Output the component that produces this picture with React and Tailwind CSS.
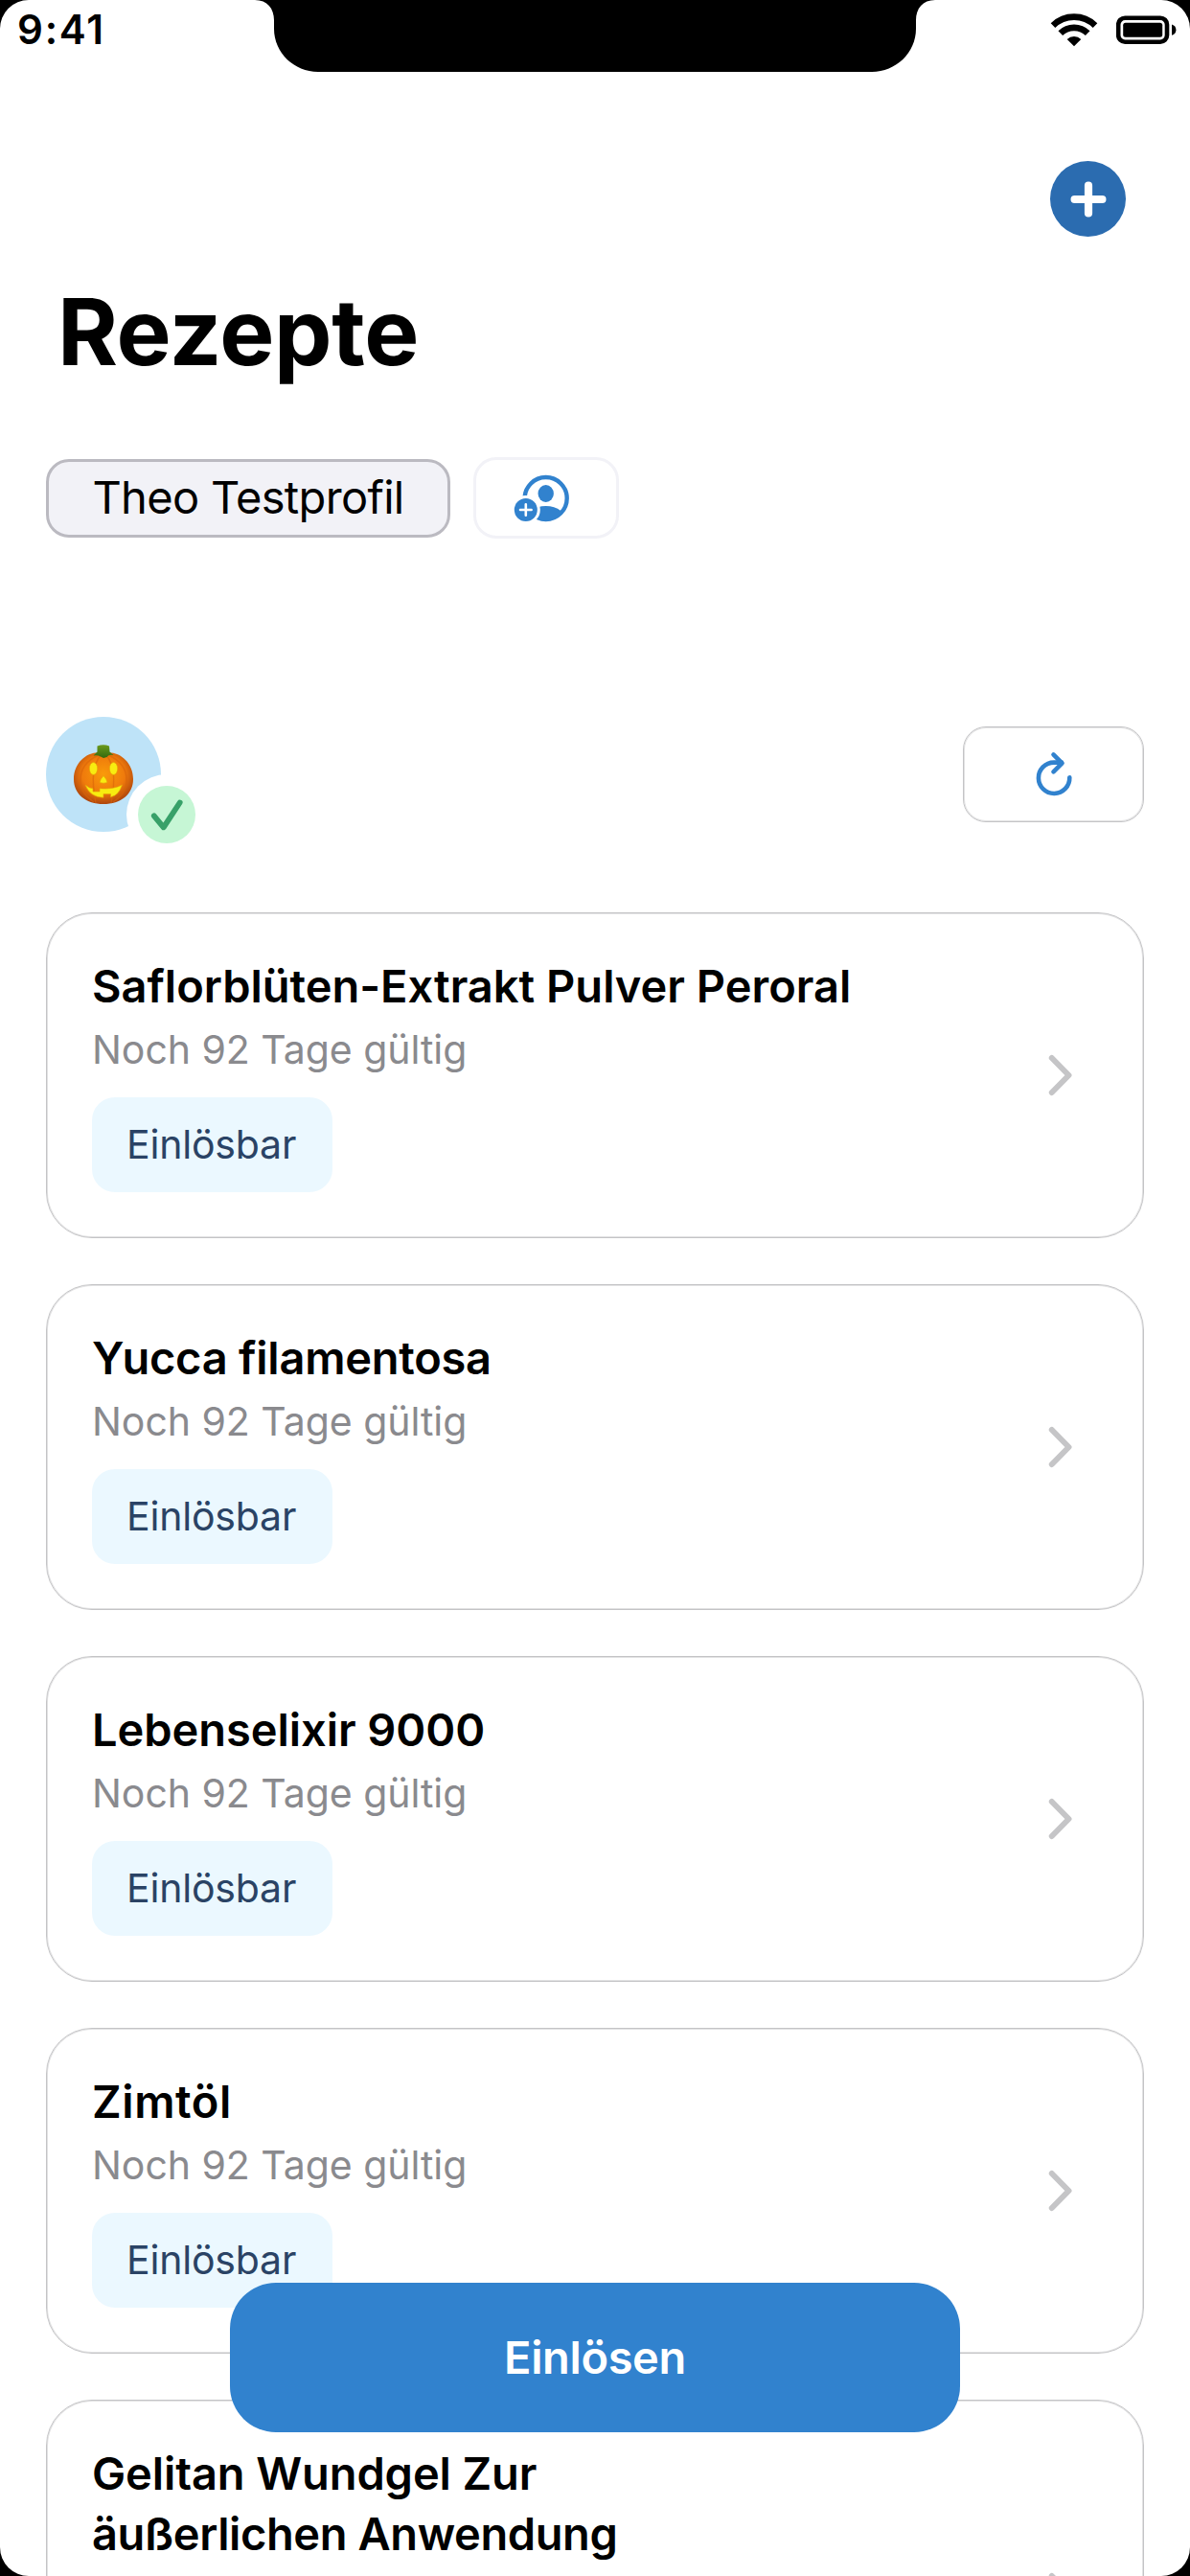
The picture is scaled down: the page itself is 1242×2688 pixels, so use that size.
const VALIDITY = "Noch 92 Tage gültig";
const STATUS = "Einlösbar";

const PRESCRIPTIONS = [
  { lines: [{ text: "Saflorblüten-Extrakt Pulver Peroral", tracking: "tracking-[0px]" }], validity: VALIDITY, status: STATUS },
  { lines: [{ text: "Yucca filamentosa", tracking: "tracking-[-0.25px]" }], validity: VALIDITY, status: STATUS },
  { lines: [{ text: "Lebenselixir 9000", tracking: "tracking-[-0.05px]" }], validity: VALIDITY, status: STATUS },
  { lines: [{ text: "Zimtöl", tracking: "tracking-[0.6px]" }], validity: VALIDITY, status: STATUS },
  {
    lines: [
      { text: "Gelitan Wundgel Zur", tracking: "tracking-[-0.1px]" },
      { text: "äußerlichen Anwendung", tracking: "tracking-[-0.4px]" },
    ],
  },
];

function Notch() {
  return (
    <svg width="710" height="75" viewBox="0 0 710 75" className="block shrink-0">
      <path d="M0 0H710C697 0 690 9 690 21V30C690 55 669 75 644 75H66C41 75 20 55 20 30V21C20 9 13 0 0 0Z" fill="#000" />
    </svg>
  );
}

function WifiIcon() {
  return (
    <svg width="50" height="36" viewBox="0 0 50 36" fill="none" stroke="#000" strokeWidth="6.6">
      <path d="M3 13.6A31.5 31.5 0 0 1 47 13.6" />
      <path d="M10.8 21.7A20.2 20.2 0 0 1 39.2 21.7" />
      <path d="M25 35.3L17.7 28A10.3 10.3 0 0 1 32.3 28Z" fill="#000" stroke="none" />
    </svg>
  );
}

function BatteryIcon() {
  return (
    <svg width="64" height="30" viewBox="0 0 64 30">
      <rect x="2.2" y="2.7" width="50.8" height="25" rx="7" fill="none" stroke="#000" strokeWidth="4.6" />
      <rect x="7.2" y="7.7" width="41" height="15" rx="2.5" fill="#000" />
      <path d="M58 9.6Q62.4 11 62.4 15.2T58 20.8Z" fill="#000" />
    </svg>
  );
}

function PlusIcon() {
  return (
    <svg width="38" height="38" viewBox="0 0 38 38" stroke="#fff" strokeWidth="8.2" strokeLinecap="round">
      <path d="M19 4.6V33.4M4.6 19H33.4" />
    </svg>
  );
}

function AddProfileIcon() {
  return (
    <svg width="60" height="52" viewBox="0 0 60 52">
      <defs>
        <clipPath id="profile-disc">
          <circle cx="33.7" cy="26" r="23.5" />
        </clipPath>
      </defs>
      <circle cx="33.7" cy="26" r="22" fill="none" stroke="#3182ce" strokeWidth="4.4" />
      <ellipse cx="33.7" cy="21" rx="8.2" ry="9" fill="#3182ce" />
      <ellipse cx="33.7" cy="51" rx="22" ry="17" fill="#3182ce" clipPath="url(#profile-disc)" />
      <circle cx="12.8" cy="38" r="15" fill="#fff" />
      <circle cx="12.8" cy="38" r="12" fill="#3182ce" />
      <path d="M12.8 32.2V43.8M7 38H18.6" stroke="#fff" strokeWidth="2.6" strokeLinecap="round" />
    </svg>
  );
}

function PumpkinIcon() {
  return (
    <svg width="64" height="64" viewBox="0 0 64 64">
      <defs>
        <radialGradient id="pumpkin-skin" cx="0.5" cy="0.42" r="0.6">
          <stop offset="0" stopColor="#f99a0a" />
          <stop offset="0.6" stopColor="#ef7a0c" />
          <stop offset="1" stopColor="#a8400c" />
        </radialGradient>
        <linearGradient id="pumpkin-stem" x1="0" y1="0" x2="0" y2="1">
          <stop offset="0" stopColor="#6c9a1c" />
          <stop offset="1" stopColor="#33690f" />
        </linearGradient>
      </defs>
      <path d="M32 10C46 6 63 18 63 37C63 53 50 63 32 63S1 53 1 37C1 18 18 6 32 10Z" fill="url(#pumpkin-skin)" />
      <g fill="none" stroke="#d9640a" strokeWidth="1.4" opacity="0.6">
        <path d="M27 12C13 18 8 28 8 38S12 54 22 61" />
        <path d="M29 12C21 22 19 36 24 62" />
        <path d="M35 12C43 22 45 36 40 62" />
        <path d="M37 12C51 18 56 28 56 38S52 54 42 61" />
      </g>
      <path d="M25.5 2.5Q32 0 38 2.5L38.5 8.5L42.5 12Q37 11 35.5 14L32 15L29 13.5Q26 11.5 21.5 12.5L25.5 8.5Z" fill="url(#pumpkin-stem)" />
      <g fill="#f8ec10" stroke="#e2a008" strokeWidth="0.6">
        <ellipse cx="21.5" cy="26" rx="4.2" ry="6.4" />
        <ellipse cx="42.5" cy="26" rx="4.2" ry="6.4" />
        <path d="M32 33.5Q35.5 37 36 40.5Q32 42 28 40.5Q28.5 37 32 33.5Z" />
        <path d="M13 43Q17 46.5 21 46.8V50H28V46.8Q42 48 51.5 43Q48 54 39.5 55.8V52.5H32V56.2Q18 56 13 43Z" />
      </g>
    </svg>
  );
}

function CheckIcon() {
  return (
    <svg width="60" height="60" viewBox="0 0 60 60" fill="none" stroke="#38a169" strokeWidth="5.8" strokeLinecap="round" strokeLinejoin="round">
      <path d="M16.8 31.3L26.7 43.3L43.7 17.5" />
    </svg>
  );
}

function RefreshIcon() {
  return (
    <svg width="40" height="48" viewBox="0 0 40 48" fill="none" stroke="#3182ce" strokeWidth="4.6" strokeLinecap="round" strokeLinejoin="round">
      <path d="M36.3 27.3A16.2 16.2 0 1 1 20 11.6H28" />
      <path d="M19.5 3.4L28.5 12.4L19.5 21.3" />
    </svg>
  );
}

function ChevronIcon() {
  return (
    <svg width="26" height="44" viewBox="0 0 26 44" fill="none" stroke="#c5c5c7" strokeWidth="6" strokeLinecap="round" strokeLinejoin="round" className="mt-[3px] mr-[73px] shrink-0">
      <path d="M3.8 4L21.5 22L3.8 40" />
    </svg>
  );
}

function PrescriptionCard({ lines, validity, status }) {
  const height = lines.length > 1 ? "h-[403px]" : "h-[340px]";
  return (
    <li className={`flex shrink-0 items-center justify-between rounded-[48px] border border-[#c4c4c6] bg-white pt-[44px] pb-[47px] pl-[47px] shadow-[inset_0_0_0_1px_#e2e2e3] ${height}`}>
      <div className="flex flex-col items-start self-start">
        <h2 className="text-[47px] leading-[63px] font-semibold">
          {lines.map((line) => (
            <span key={line.text} className={`block whitespace-nowrap ${line.tracking}`}>{line.text}</span>
          ))}
        </h2>
        {validity && <p className="mt-[8px] text-[41px] leading-[54px] tracking-[-0.04px] text-[#8a8a8e]">{validity}</p>}
        {status && (
          <span className="mt-[23px] flex h-[99px] w-[251px] items-center rounded-3xl bg-[#ebf8ff] pl-[36px] text-[41px] tracking-[-0.2px] text-[#2a4365]">
            {status}
          </span>
        )}
      </div>
      <ChevronIcon />
    </li>
  );
}

export default function App() {
  return (
    <div className="h-[2688px] w-[1242px] overflow-hidden bg-black font-[Inter,sans-serif] text-black">
      <div className="relative flex h-full flex-col overflow-hidden rounded-[30px] bg-white">
        <header className="flex h-[75px] shrink-0 items-start">
          <time className="w-[266px] shrink-0 pl-[18px] text-[42px] leading-[61px] font-semibold tracking-[1.8px]">9:41</time>
          <Notch />
          <div className="flex flex-1 items-start pt-[13px] pl-[120px]">
            <WifiIcon />
            <div className="ml-[19px] pt-[3px]">
              <BatteryIcon />
            </div>
          </div>
        </header>

        <div className="mt-[93px] mr-[67px] flex h-[79px] shrink-0 justify-end">
          <button className="flex size-[79px] items-center justify-center rounded-full bg-[#2b6cb0]">
            <PlusIcon />
          </button>
        </div>

        <h1 className="mt-[41px] ml-[60px] shrink-0 text-[96px] leading-[116px] font-bold tracking-[-0.33px]">Rezepte</h1>

        <nav className="mt-[73px] ml-12 flex h-[85px] shrink-0 items-center gap-6">
          <button className="flex h-[82px] w-[422px] items-center justify-center rounded-3xl border-3 border-[#bbbac1] bg-[#f2f2f7] text-[47px] tracking-[-0.67px] whitespace-nowrap">
            Theo Testprofil
          </button>
          <button className="flex h-[85px] w-[152px] items-center rounded-3xl border-3 border-[#f2f2f7] bg-white pl-[39px]">
            <AddProfileIcon />
          </button>
        </nav>

        <div className="mx-12 mt-[186px] flex h-[120px] shrink-0 items-center justify-between">
          <div className="relative flex size-[120px] items-center justify-center rounded-full bg-[#bee3f8]">
            <PumpkinIcon />
            <div className="absolute top-[60px] left-[84px] flex size-[84px] items-center justify-center rounded-full bg-white">
              <div className="flex size-[60px] items-center justify-center rounded-full bg-[#c6f6d5]">
                <CheckIcon />
              </div>
            </div>
          </div>
          <button className="flex h-[100px] w-[189px] items-center justify-center rounded-3xl border border-[#c4c4c6] shadow-[inset_0_0_0_1px_#e2e2e3]">
            <RefreshIcon />
          </button>
        </div>

        <ul className="mx-12 mt-[84px] flex shrink-0 flex-col gap-12">
          {PRESCRIPTIONS.map((item) => (
            <PrescriptionCard key={item.lines[0].text} {...item} />
          ))}
        </ul>

        <button className="absolute bottom-[150px] left-60 flex h-[156px] w-[762px] items-center justify-center rounded-[48px] bg-[#3182ce] text-[47px] font-semibold tracking-[-0.37px] text-white">
          Einlösen
        </button>
      </div>
    </div>
  );
}
